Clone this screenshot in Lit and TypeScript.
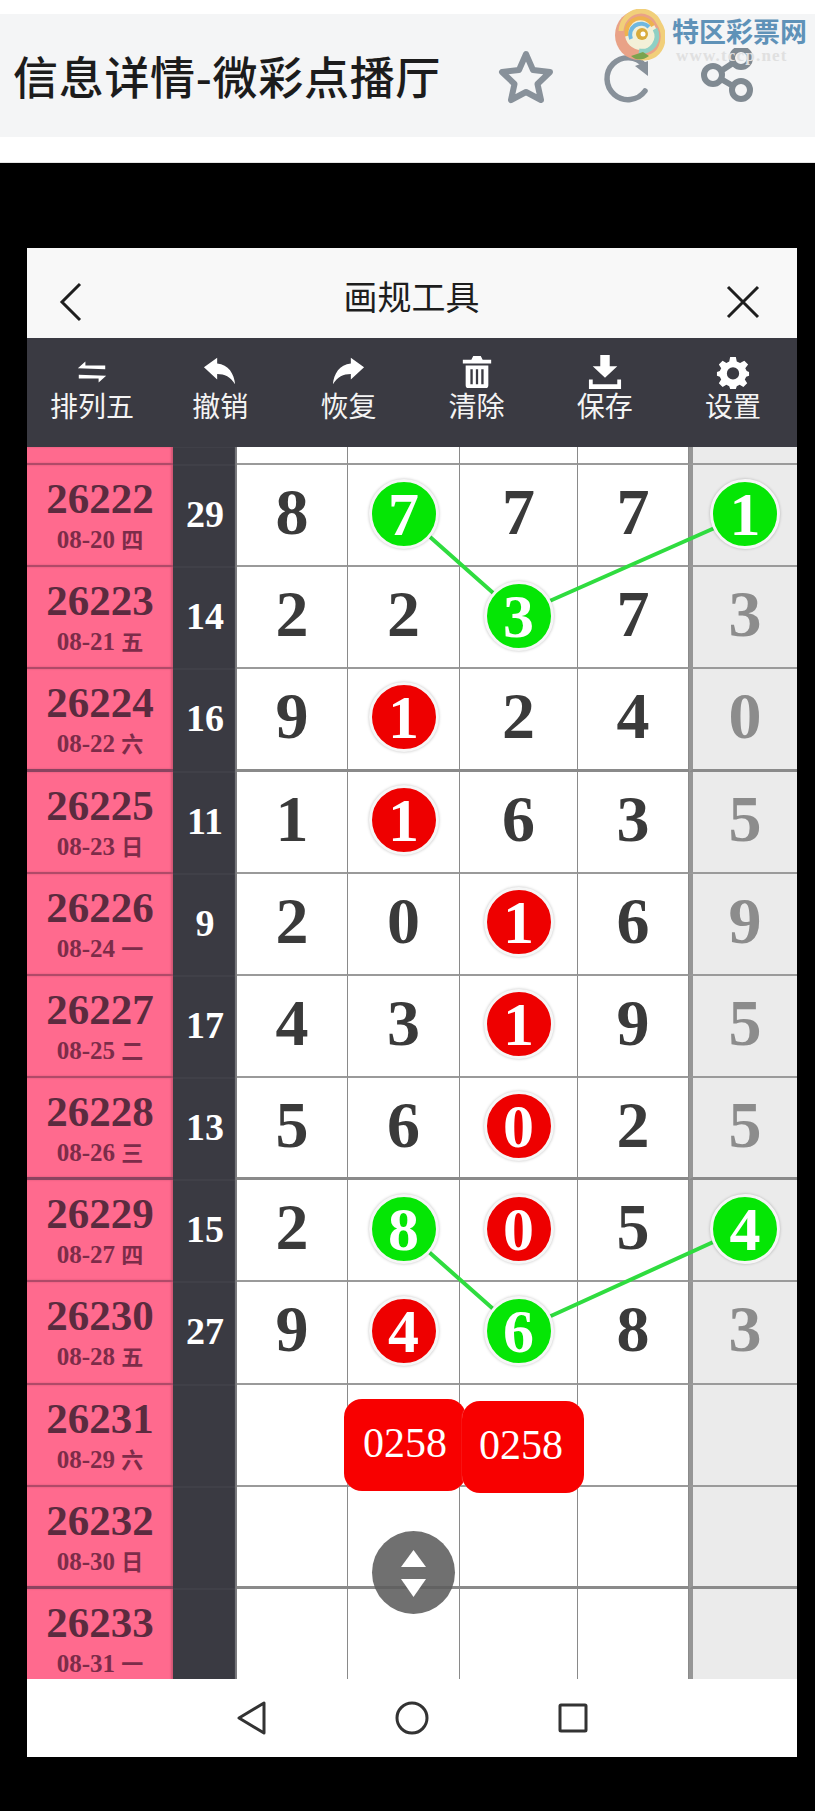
import { LitElement, html, css, svg } from "lit";
import { customElement } from "lit/decorators.js";

type Cell = { v: string; c?: "g" | "r" };
interface Row { id: string; date: string; wd: string; sum?: string; cells?: Cell[]; }

const p = (s: string): Cell[] =>
  s.split(" ").map((t) => ({ v: t[0], c: t[1] as "g" | "r" | undefined }));

const ROWS: Row[] = [
  { id: "26222", date: "08-20", wd: "四", sum: "29", cells: p("8 7g 7 7 1g") },
  { id: "26223", date: "08-21", wd: "五", sum: "14", cells: p("2 2 3g 7 3") },
  { id: "26224", date: "08-22", wd: "六", sum: "16", cells: p("9 1r 2 4 0") },
  { id: "26225", date: "08-23", wd: "日", sum: "11", cells: p("1 1r 6 3 5") },
  { id: "26226", date: "08-24", wd: "一", sum: "9", cells: p("2 0 1r 6 9") },
  { id: "26227", date: "08-25", wd: "二", sum: "17", cells: p("4 3 1r 9 5") },
  { id: "26228", date: "08-26", wd: "三", sum: "13", cells: p("5 6 0r 2 5") },
  { id: "26229", date: "08-27", wd: "四", sum: "15", cells: p("2 8g 0r 5 4g") },
  { id: "26230", date: "08-28", wd: "五", sum: "27", cells: p("9 4r 6g 8 3") },
  { id: "26231", date: "08-29", wd: "六" },
  { id: "26232", date: "08-30", wd: "日" },
  { id: "26233", date: "08-31", wd: "一" },
];

const THICK = new Set([2, 6, 10]);

const TOOLS = [
  { label: "排列五", icon: svg`<path d="M3 14 L11 7 L11 11 L32 11 L32 15 Z M33 22 L25 29 L25 25 L4 25 L4 21 Z" fill="#fff"/>` },
  { label: "撤销", icon: svg`<path d="M1 13 L15 3 L15 9 C27 10 33 20 34 31 C29 23 23 20 15 20 L15 26 Z" fill="#fff"/>` },
  { label: "恢复", icon: svg`<path d="M35 13 L21 3 L21 9 C9 10 3 20 2 31 C7 23 13 20 21 20 L21 26 Z" fill="#fff"/>` },
  { label: "清除", icon: svg`<path fill-rule="evenodd" fill="#fff" d="M14 1 H22 L24 5 H33 V9 H3 V5 H12 Z M6 11 H30 V32 Q30 35 27 35 H9 Q6 35 6 32 Z M11 15 V31 H13.500 V15 Z M16.800 15 V31 H19.200 V15 Z M22.500 15 V31 H25 V15 Z"/>` },
  { label: "保存", icon: svg`<path fill="#fff" d="M13 0 H23 V12 H31 L18 24 L5 12 H13 Z M1 26 H5 V31 H31 V26 H35 V36 H1 Z"/>` },
  { label: "设置", icon: svg`<path fill="#fff" fill-rule="evenodd" d="M15 2 H21 L22 7 L25.500 8.500 L30 6 L34 10 L31 14 L32.500 17 L35 18 V22 L32 23 L30.500 26 L33 30 L29 34 L25 31.500 L22 33 L21 36 H15 L14 33 L11 31.500 L7 34 L3 30 L5.500 26 L4 23 L1 22 V18 L4 17 L5.500 14 L3 10 L7 6 L11 8.500 L14 7 Z M18 13 A6.500 6.500 0 1 0 18 26 A6.500 6.500 0 1 0 18 13 Z"/>` },
];

@customElement("app-root")
export class AppRoot extends LitElement {
  static styles = css`
    :host {
      display: block;
      position: relative;
      width: 815px;
      height: 1811px;
      overflow: hidden;
      background: #000;
      font-family: "Liberation Serif", serif;
    }
    .top {
      height: 163px;
      box-sizing: border-box;
      padding-top: 14px;
      background: #fff;
      border-bottom: 1px solid #e4e4e4;
    }
    .band {
      height: 123px;
      background: #f4f5f6;
      display: flex;
      align-items: center;
      padding: 0 0 0 13px;
      position: relative;
    }
    .page-title {
      font: 500 45px/1 "Noto Sans CJK SC", "Noto Sans", sans-serif;
      letter-spacing: 0.700px;
      color: #1c1c1c;
      white-space: nowrap;
      width: 483px;
    }
    .band-icons { display: flex; margin-top: 5px; }
    .band-icons svg { display: block; width: 60px; height: 60px; margin-right: 42px; }
    .mark {
      position: absolute;
      left: 613px;
      top: 9px;
      width: 200px;
      height: 56px;
      pointer-events: none;
    }
    .mark svg { position: absolute; left: 0; top: 0; }
    .mark-name {
      position: absolute;
      left: 59px;
      top: 8px;
      font: 700 27px/28px "Noto Sans CJK SC", sans-serif;
      color: #5f92b8;
      white-space: nowrap;
    }
    .mark-url {
      position: absolute;
      left: 63px;
      top: 37px;
      font: 700 17px/19px "Liberation Serif", serif;
      letter-spacing: 1.200px;
      color: #e0e0e0;
      white-space: nowrap;
    }
    .stage { padding: 85px 18px 54px 27px; }
    .panel { width: 770px; }
    .titlebar {
      height: 90px;
      background: #f8f8f8;
      display: flex;
      align-items: center;
      justify-content: space-between;
      padding: 0 37px 0 32px;
      position: relative;
    }
    .titlebar svg { display: block; margin-top: 18px; }
    .titlebar h1 {
      margin: 5px 0 0;
      font: 400 34px/1 "Noto Sans CJK SC", sans-serif;
      color: #1e1e1e;
      flex: 1;
      text-align: center;
      padding-left: 14px;
    }
    .toolbar {
      height: 109px;
      box-sizing: border-box;
      background: #3a3a42;
      display: grid;
      grid-template-columns: repeat(6, 1fr);
      padding: 17px 0 0 1px;
    }
    .tool { display: flex; flex-direction: column; align-items: center; color: #fff; }
    .tool svg { display: block; width: 34px; height: 34px; }
    .tool span {
      font: 400 28px/36px "Noto Sans CJK SC", sans-serif;
      color: #f4f4f4;
      margin-top: -2px;
    }
    .sheet {
      position: relative;
      height: 1232px;
      overflow: hidden;
      background: #fff;
    }
    .row {
      display: grid;
      grid-template-columns: 146px 64px 111px 112px 118px 111px 108px;
      height: 102.180px;
    }
    .row.stub { height: 18px; }
    .row > div { box-sizing: border-box; border-bottom: 2px solid #9a9a9a; }
    .row.thick > div { border-bottom: 3px solid #8a8a8a; }
    .id-cell {
      background: #ff6a8e;
      display: flex;
      flex-direction: column;
      align-items: center;
      box-shadow: inset -2px 0 2px rgba(120, 50, 70, 0.35);
    }
    .row > .id-cell { border-bottom-color: #b04a68; }
    .row.thick > .id-cell { border-bottom-color: #8c4460; }
    .id {
      font: 700 43px/46px "Liberation Serif", serif;
      color: #5b2b3f;
      margin-top: 11px;
    }
    .date {
      font: 700 25px/30px "Liberation Serif", "Noto Sans CJK SC", sans-serif;
      color: #7c2c49;
      margin-top: 1px;
      white-space: nowrap;
    }
    .date b { font: 700 22px/30px "Noto Sans CJK SC", sans-serif; }
    .row > .sum-cell, .row.thick > .sum-cell {
      background: #3a3a42;
      border-bottom: none;
      box-shadow: inset -2px 0 1px rgba(170, 170, 170, 0.6);
      display: flex;
      align-items: center;
      justify-content: center;
      padding-bottom: 4px;
      font: 700 38px/1 "Liberation Serif", serif;
      color: #fff;
    }
    .num {
      display: flex;
      align-items: center;
      justify-content: center;
      padding-bottom: 6px;
      font: 700 66px/1 "Liberation Serif", serif;
      color: #3a3a3a;
      border-right: 1px solid #8a8a8a;
    }
    .num.end { border-right: none; }
    .num.extra {
      background: #ebebeb;
      color: #8c8c8c;
      border-left: 4px solid #969696;
    }
    .ball {
      position: relative;
      z-index: 2;
      width: 64px;
      height: 64px;
      margin-top: 3px;
      box-sizing: content-box;
      border: 3px solid #f6f6f6;
      border-radius: 50%;
      box-shadow: 0 0 3px rgba(0, 0, 0, 0.25);
      display: flex;
      align-items: center;
      justify-content: center;
      color: #fff;
      font: 700 62px/1 "Liberation Serif", serif;
    }
    .ball.g { background: #05e605; }
    .ball.r { background: #ee0000; }
    .links { position: absolute; left: 0; top: 0; z-index: 1; pointer-events: none; }
    .pill {
      position: absolute;
      z-index: 3;
      width: 122px;
      height: 92px;
      border-radius: 18px;
      background: #f80000;
      color: #fff;
      font: 400 42px/88px "Liberation Serif", serif;
      text-align: center;
      box-shadow: 0 0 1px rgba(255, 255, 255, 0.7);
    }
    .pill.a { left: 317px; top: 952px; }
    .pill.b { left: 435px; top: 954px; text-indent: -4px; }
    .scroller {
      position: absolute;
      z-index: 4;
      left: 345px;
      top: 1084px;
      width: 83px;
      height: 83px;
      border-radius: 50%;
      background: rgba(92, 92, 92, 0.88);
    }
    .scroller svg { display: block; }
    .nav {
      height: 78px;
      background: #fff;
      display: flex;
      align-items: center;
      padding-left: 209px;
    }
    .nav svg { display: block; }
    .nav .home { margin-left: 126px; }
    .nav .recent { margin-left: 127px; }
  `;

  render() {
    return html`
      <div class="top">
        <div class="band">
          <div class="page-title">信息详情-微彩点播厅</div>
          <div class="band-icons">
            <svg viewBox="0 0 60 60" fill="none" stroke="#88919a" stroke-width="6" stroke-linejoin="round" stroke-linecap="round">
              <path d="M30 6 L37 22 L54 24 L41.500 36 L45 52 L30 44 L15 52 L18.500 36 L6 24 L23 22 Z"/>
            </svg>
            <svg viewBox="0 0 60 60" fill="none" stroke="#88919a" stroke-width="5.500" stroke-linecap="round">
              <path d="M47 43 A21 21 0 1 1 46 17"/>
              <path d="M37 18 L50 13 L50 28 Z" fill="#88919a" stroke="none"/>
            </svg>
            <svg viewBox="0 0 60 60" fill="none" stroke="#808a92" stroke-width="6">
              <circle cx="41" cy="10" r="9"/>
              <circle cx="13" cy="27" r="9"/>
              <circle cx="41" cy="42" r="9"/>
              <path d="M21 23 L33 15 M21 31 L33 38"/>
            </svg>
          </div>
        </div>
        <div class="mark">
          <svg width="52" height="52" viewBox="0 0 52 52" fill="none">
            <ellipse cx="26" cy="26" rx="24" ry="25" fill="#e9a287"/>
            <path d="M8 22 A20 21 0 0 1 46 14 A24 25 0 0 1 48 38 A18 18 0 0 1 26 48" fill="none" stroke="#f1cf7a" stroke-width="5"/>
            <circle cx="28" cy="25" r="16" fill="#f3f0d8"/>
            <path d="M14 27 A14 14 0 0 1 40 17" stroke="#eeb24e" stroke-width="4"/>
            <path d="M42 20 A15 15 0 0 1 26 42" stroke="#8fd0c4" stroke-width="5"/>
            <path d="M18 30 A11 11 0 0 1 36 18" stroke="#6fb8e0" stroke-width="4"/>
            <circle cx="29" cy="25" r="6" fill="#d9ab3c"/>
            <circle cx="30" cy="25" r="2.500" fill="#fff"/>
            <path d="M18 47 Q26 54 36 47 L30 43 Z" fill="#7aa34e"/>
          </svg>
          <div class="mark-name">特区彩票网</div>
          <div class="mark-url">www.tccp.net</div>
        </div>
      </div>
      <div class="stage">
        <div class="panel">
          <div class="titlebar">
            <svg width="24" height="40" viewBox="0 0 24 40" fill="none" stroke="#1e1e1e" stroke-width="3"><path d="M21 2 L3 20 L21 38"/></svg>
            <h1>画规工具</h1>
            <svg width="34" height="34" viewBox="0 0 34 34" fill="none" stroke="#1e1e1e" stroke-width="3"><path d="M2 2 L32 32 M32 2 L2 32"/></svg>
          </div>
          <div class="toolbar">
            ${TOOLS.map((t) => html`
              <div class="tool">
                <svg viewBox="0 0 36 36">${t.icon}</svg>
                <span>${t.label}</span>
              </div>`)}
          </div>
          <div class="sheet">
            <div class="row stub">
              <div class="id-cell"></div><div class="sum-cell"></div>
              <div class="num"></div><div class="num"></div><div class="num"></div><div class="num"></div>
              <div class="num end extra"></div>
            </div>
            ${ROWS.map((r, i) => this.renderRow(r, i))}
            <svg class="links" width="770" height="1232" fill="none" stroke="#2fdc3f" stroke-width="4">
              <polyline points="376,66 491,168 717,68"/>
              <polyline points="376,782 491,884 717,781"/>
            </svg>
            <div class="pill a">0258</div>
            <div class="pill b">0258</div>
            <div class="scroller">
              <svg width="83" height="83" viewBox="0 0 83 83" fill="#fff">
                <path d="M41.500 19 L54 36 H29 Z"/>
                <path d="M29 48 H54 L41.500 66 Z"/>
              </svg>
            </div>
          </div>
          <div class="nav">
            <svg width="32" height="36" viewBox="0 0 32 36" fill="none" stroke="#333" stroke-width="3" stroke-linejoin="round"><path d="M28 3 V33 L3 18 Z"/></svg>
            <svg class="home" width="36" height="36" viewBox="0 0 36 36" fill="none" stroke="#333" stroke-width="3"><circle cx="18" cy="18" r="15"/></svg>
            <svg class="recent" width="32" height="32" viewBox="0 0 32 32" fill="none" stroke="#333" stroke-width="3" stroke-linejoin="round"><rect x="3" y="3" width="26" height="26" rx="1"/></svg>
          </div>
        </div>
      </div>
    `;
  }

  renderRow(r: Row, i: number) {
    const cells: Cell[] = r.cells ?? [{ v: "" }, { v: "" }, { v: "" }, { v: "" }, { v: "" }];
    return html`
      <div class="row ${THICK.has(i) ? "thick" : ""}">
        <div class="id-cell">
          <div class="id">${r.id}</div>
          <div class="date">${r.date} <b>${r.wd}</b></div>
        </div>
        <div class="sum-cell">${r.sum ?? ""}</div>
        ${cells.map((c, j) => html`
          <div class="num ${j === 4 ? "end extra" : ""}">
            ${c.c ? html`<div class="ball ${c.c}">${c.v}</div>` : c.v}
          </div>`)}
      </div>
    `;
  }
}
